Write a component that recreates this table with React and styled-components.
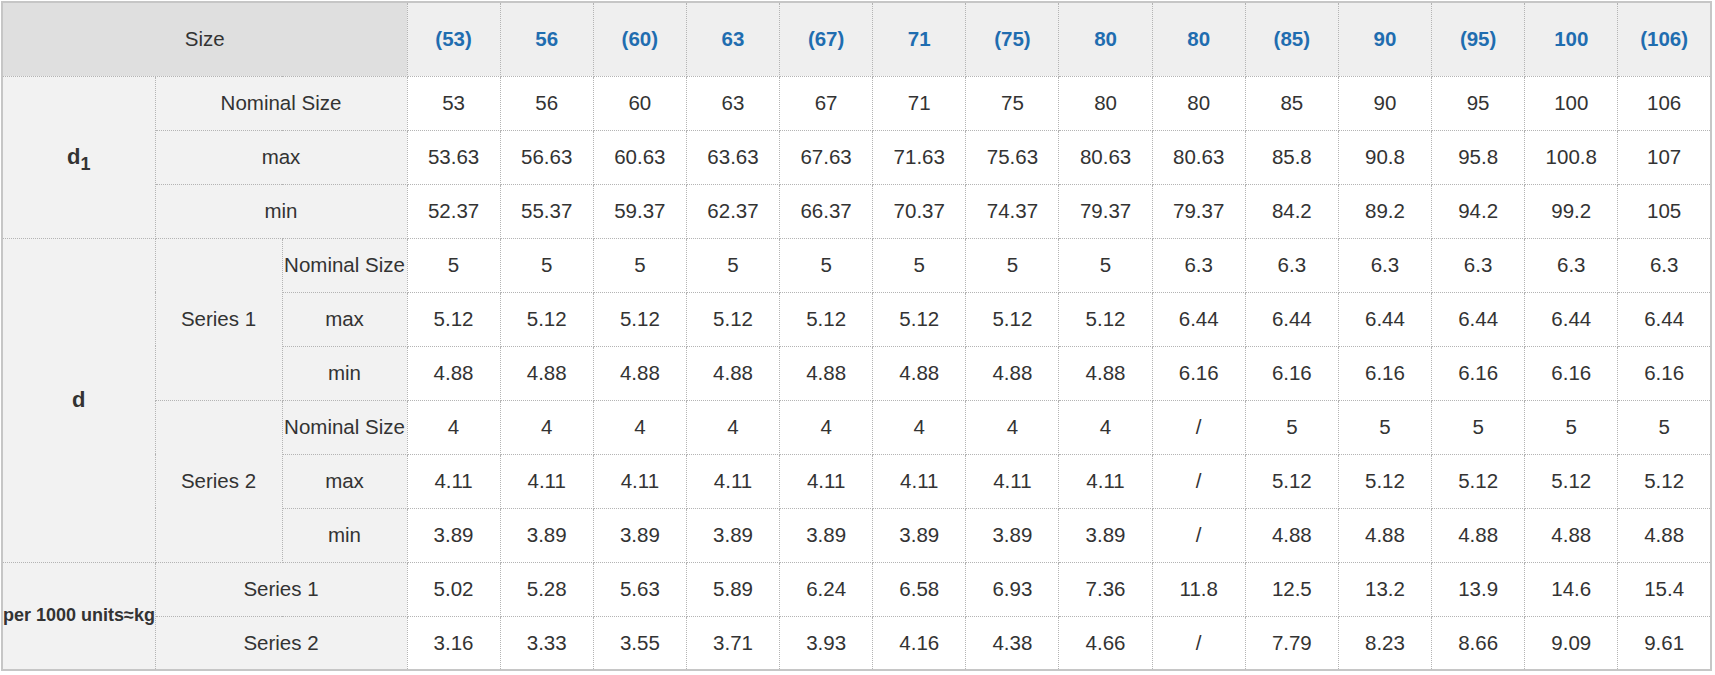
import React from "react";
import styled, { createGlobalStyle } from "styled-components";

const GlobalStyle = createGlobalStyle`
  html, body {
    margin: 0;
    padding: 0;
    background: #fff;
  }
  body {
    padding: 1px;
    font-family: "Liberation Sans", Arial, sans-serif;
  }
`;

const Table = styled.table`
  width: 1711px;
  border-collapse: collapse;
  table-layout: fixed;
  border: 2px solid #c6c6c6;
  color: #333;
  font-size: 20.5px;
`;

const HeadRow = styled.tr`
  height: 74px;
`;

const Row = styled.tr`
  height: 54px;
`;

const Cell = styled.td`
  border: 1px dotted #b4b4b4;
  text-align: center;
  vertical-align: middle;
  padding: 0;
  white-space: nowrap;
  overflow: visible;
  background: ${(p) => (p.$label ? "#f2f2f2" : "#fff")};
`;

const SizeHead = styled(Cell)`
  background: #dfdfdf;
`;

const NumHead = styled(Cell)`
  background: #efefef;
  color: #1f6db0;
  font-weight: bold;
`;

const Group = styled(Cell)`
  background: #f2f2f2;
  font-weight: bold;
  font-size: ${(p) => p.$size || "22px"};
  text-align: ${(p) => p.$align || "center"};
`;

const Sub = styled.sub`
  font-size: 0.82em;
  vertical-align: -0.35em;
  line-height: 0;
`;

const sizes = ["(53)", "56", "(60)", "63", "(67)", "71", "(75)", "80", "80", "(85)", "90", "(95)", "100", "(106)"];

const d1 = {
  nominal: ["53", "56", "60", "63", "67", "71", "75", "80", "80", "85", "90", "95", "100", "106"],
  max: ["53.63", "56.63", "60.63", "63.63", "67.63", "71.63", "75.63", "80.63", "80.63", "85.8", "90.8", "95.8", "100.8", "107"],
  min: ["52.37", "55.37", "59.37", "62.37", "66.37", "70.37", "74.37", "79.37", "79.37", "84.2", "89.2", "94.2", "99.2", "105"],
};

const series1 = {
  nominal: ["5", "5", "5", "5", "5", "5", "5", "5", "6.3", "6.3", "6.3", "6.3", "6.3", "6.3"],
  max: ["5.12", "5.12", "5.12", "5.12", "5.12", "5.12", "5.12", "5.12", "6.44", "6.44", "6.44", "6.44", "6.44", "6.44"],
  min: ["4.88", "4.88", "4.88", "4.88", "4.88", "4.88", "4.88", "4.88", "6.16", "6.16", "6.16", "6.16", "6.16", "6.16"],
};

const series2 = {
  nominal: ["4", "4", "4", "4", "4", "4", "4", "4", "/", "5", "5", "5", "5", "5"],
  max: ["4.11", "4.11", "4.11", "4.11", "4.11", "4.11", "4.11", "4.11", "/", "5.12", "5.12", "5.12", "5.12", "5.12"],
  min: ["3.89", "3.89", "3.89", "3.89", "3.89", "3.89", "3.89", "3.89", "/", "4.88", "4.88", "4.88", "4.88", "4.88"],
};

const weight1 = ["5.02", "5.28", "5.63", "5.89", "6.24", "6.58", "6.93", "7.36", "11.8", "12.5", "13.2", "13.9", "14.6", "15.4"];
const weight2 = ["3.16", "3.33", "3.55", "3.71", "3.93", "4.16", "4.38", "4.66", "/", "7.79", "8.23", "8.66", "9.09", "9.61"];

const Values = ({ list }) => list.map((v, i) => <Cell key={i}>{v}</Cell>);

const App = () => (
  <>
    <GlobalStyle />
    <Table>
      <colgroup>
        <col style={{ width: 153 }} />
        <col style={{ width: 127 }} />
        <col style={{ width: 125 }} />
        {sizes.map((s, i) => (
          <col key={i} />
        ))}
      </colgroup>
      <tbody>
        <HeadRow>
          <SizeHead colSpan={3}>Size</SizeHead>
          {sizes.map((s, i) => (
            <NumHead key={i}>{s}</NumHead>
          ))}
        </HeadRow>

        <Row>
          <Group rowSpan={3}>
            d<Sub>1</Sub>
          </Group>
          <Cell $label colSpan={2}>Nominal Size</Cell>
          <Values list={d1.nominal} />
        </Row>
        <Row>
          <Cell $label colSpan={2}>max</Cell>
          <Values list={d1.max} />
        </Row>
        <Row>
          <Cell $label colSpan={2}>min</Cell>
          <Values list={d1.min} />
        </Row>

        <Row>
          <Group rowSpan={6}>d</Group>
          <Cell $label rowSpan={3}>Series 1</Cell>
          <Cell $label>Nominal Size</Cell>
          <Values list={series1.nominal} />
        </Row>
        <Row>
          <Cell $label>max</Cell>
          <Values list={series1.max} />
        </Row>
        <Row>
          <Cell $label>min</Cell>
          <Values list={series1.min} />
        </Row>
        <Row>
          <Cell $label rowSpan={3}>Series 2</Cell>
          <Cell $label>Nominal Size</Cell>
          <Values list={series2.nominal} />
        </Row>
        <Row>
          <Cell $label>max</Cell>
          <Values list={series2.max} />
        </Row>
        <Row>
          <Cell $label>min</Cell>
          <Values list={series2.min} />
        </Row>

        <Row>
          <Group rowSpan={2} $size="18px" $align="left">
            per 1000 units≈kg
          </Group>
          <Cell $label colSpan={2}>Series 1</Cell>
          <Values list={weight1} />
        </Row>
        <Row>
          <Cell $label colSpan={2}>Series 2</Cell>
          <Values list={weight2} />
        </Row>
      </tbody>
    </Table>
  </>
);

export default App;
